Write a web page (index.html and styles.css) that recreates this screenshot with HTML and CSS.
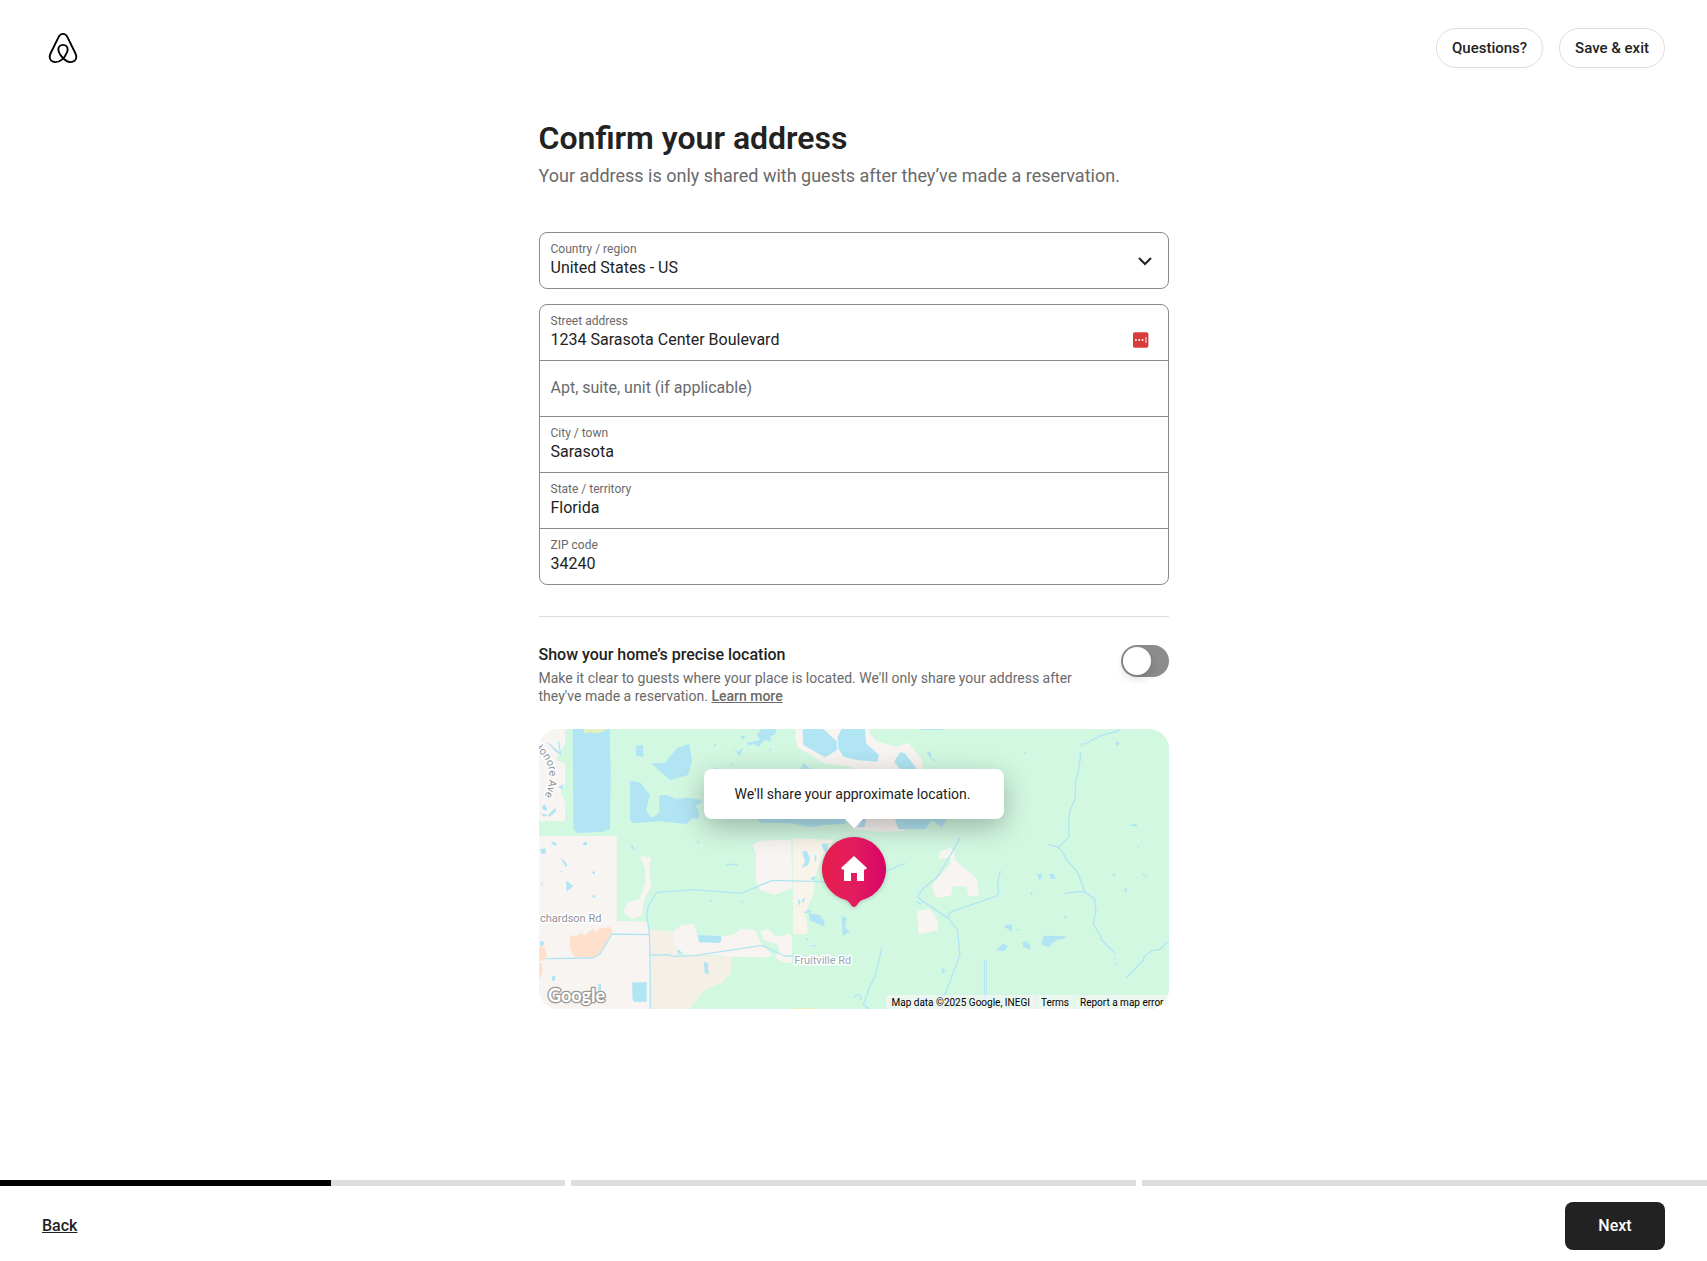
FILE: index.html
```html
<!DOCTYPE html>
<html lang="en">
  <head>
    <meta charset="UTF-8">
    <meta name="viewport" content="width=device-width,initial-scale=1">
    <title>Confirm your address</title>
    <link rel="stylesheet" href="styles.css">
  </head>
  <body>
    <header class="top-bar">
      <a class="logo" href="/" aria-label="Home">
        <svg viewBox="54 66 90 95" width="30" height="32" fill="none" stroke="#000" stroke-width="5.6" stroke-linejoin="round">
          <path d="M99 146C91 153 84 156 76 156C66 156 59 149 59 140C59 135 61 131 63 127L86 80C89 74 93 71 99 71C105 71 109 74 112 80L135 127C137 131 139 135 139 140C139 149 132 156 122 156C110 156 99 145 91 134C87 128 85 123 85 118C85 110 91 104 99 104C107 104 113 110 113 118C113 123 111 128 107 134C105 138 102 143 99 146Z"/>
        </svg>
      </a>
      <div class="top-actions">
        <button class="pill" type="button">Questions?</button>
        <button class="pill" type="button">Save &amp; exit</button>
      </div>
    </header>

    <main class="content">
      <h1>Confirm your address</h1>
      <p class="subtitle">Your address is only shared with guests after they’ve made a reservation.</p>

      <form class="address-form">
        <div class="field-group">
          <div class="field field-select">
            <label for="country">Country / region</label>
            <select id="country">
              <option>United States - US</option>
            </select>
            <svg class="chevron" viewBox="0 0 16 16" width="16" height="16" fill="none" stroke="#222" stroke-width="2">
              <path d="M2 5l6 6 6-6"/>
            </svg>
          </div>
        </div>

        <div class="field-group">
          <div class="field">
            <label for="street">Street address</label>
            <div class="field-row">
              <input type="text" id="street" value="1234 Sarasota Center Boulevard">
              <svg viewBox="0 0 16 16" width="16" height="16">
                <rect width="16" height="16" rx="2" fill="#d93a3a"/>
                <circle cx="3" cy="8" r="1" fill="#fff"/>
                <circle cx="6.5" cy="8" r="1" fill="#fff"/>
                <circle cx="10" cy="8" r="1" fill="#fff"/>
                <path d="M13.5 5v6" stroke="#fff"/>
              </svg>
            </div>
          </div>
          <div class="field field-empty">
            <input type="text" id="apt" aria-label="Apt, suite, unit (if applicable)" placeholder="Apt, suite, unit (if applicable)">
          </div>
          <div class="field">
            <label for="city">City / town</label>
            <input type="text" id="city" value="Sarasota">
          </div>
          <div class="field">
            <label for="state">State / territory</label>
            <input type="text" id="state" value="Florida">
          </div>
          <div class="field">
            <label for="zip">ZIP code</label>
            <input type="text" id="zip" value="34240">
          </div>
        </div>
      </form>

      <section class="precise">
        <div class="precise-text">
          <label class="precise-title" for="precise">Show your home’s precise location</label>
          <p>Make it clear to guests where your place is located. We'll only share your address after they've made a reservation. <a href="#">Learn more</a></p>
        </div>
        <input class="switch" type="checkbox" role="switch" id="precise">
      </section>

      <div class="map">
        <svg class="map-tiles" viewBox="27 27 1890 840" preserveAspectRatio="xMidYMid slice">
          <!-- built-up land -->
          <g fill="#f8f4f1">
            <path d="M27 27H105V70L78 120L105 132V190L92 217L105 245V303H27Z"/>
            <path d="M27 348H260V603L350 605L358 645L362 867H27Z"/>
            <path d="M797 27L795 52L802 80L880 128L960 140L980 150H1180L1176 120L1135 68L1100 80L1040 65L1018 40L1020 27Z"/>
            <path d="M960 290L970 328L1050 335L1120 333L1127 325L1100 318L1105 290Z"/>
            <path d="M330 408L363 412L357 440L363 500L342 540L336 587L305 597L280 577L292 545L327 540L347 487L345 445Z"/>
            <path d="M668 375L690 362L783 360L787 505L732 525L692 510L678 485V402Z"/>
            <path d="M690 633L715 628L740 650L780 642L787 655L785 728H760L735 712L750 690L738 670L700 660Z"/>
            <path d="M1225 418L1232 393L1262 384L1273 395L1275 420L1340 475L1347 527H1315L1310 500L1267 498L1263 527L1217 533L1205 495L1262 430V412Z"/>
            <path d="M1162 573L1200 566L1223 603V631L1165 642Z"/>
          </g>
          <path fill="#f8f4ec" d="M789 355L912 360L880 400L852 480L853 515L840 545L826 580L833 630L830 642H789Z"/>
          <path fill="#f5f0e5" d="M358 627L430 635L445 705L603 710V758L575 790L528 807L478 867H362Z"/>
          <path fill="#f8f4f1" d="M430 635L455 615L490 612L503 645L573 648L610 645L630 627L675 630L690 665L727 705L715 712L600 710L560 705H495L455 703L432 670Z"/>
          <g fill="#ffe0cc">
            <path d="M120 648L145 645L158 638L160 648L190 626L202 640L203 627L238 620L248 632L210 703L190 713H135L120 685Z"/>
            <path d="M27 678L45 682L51 710L45 720L27 723ZM27 727L35 732L39 750L30 775L27 777Z"/>
          </g>

          <!-- lakes and ponds -->
          <g fill="#b1e5f4">
            <path d="M128 27H238L242 150L240 330L225 331L222 335L140 339L130 325Z"/>
            <path d="M318 77L338 75L341 110L318 108Z"/>
            <path d="M363 130L405 128L440 85L478 71L486 120L475 165L420 180L375 140Z"/>
            <path d="M300 182L330 187L360 225L348 272L365 293L388 278V226L410 225L440 237L475 233L515 240L512 250L498 257L508 280L506 296H485L470 312L385 304L310 310L300 300Z"/>
            <path d="M550 75L560 70L557 82ZM610 82L623 95L640 85L628 110ZM630 50L648 46L640 60ZM650 68L690 60L680 42L695 27H738V40L722 50V66L705 60L685 80L670 72L655 77Z"/>
            <path d="M600 128L608 132V140ZM552 142L562 147H552ZM813 147L820 128L842 147ZM715 92L721 84L723 95Z"/>
            <path d="M818 27H880L921 65V90L885 112L820 75ZM935 27H1005L1008 70L1047 105L1042 125L980 120L940 110L925 85L923 50ZM1092 125L1110 97L1125 100L1160 147H1110Z"/>
            <path d="M678 290H950L945 312L880 315L840 322L780 310L690 308ZM983 322L1000 290H1010L1003 322ZM1093 290H1215L1185 327H1105ZM1195 290H1255L1235 323Z"/>
            <path d="M1190 98L1200 93L1205 115L1215 120L1213 125L1200 113ZM1482 98L1490 93L1488 104ZM1755 70L1762 64L1770 70L1762 78ZM1795 316L1820 310V320ZM1822 376L1832 383H1825Z"/>
            <path d="M1173 27H1240V30H1173ZM85 200L98 193V210ZM35 262L45 252L52 270L42 272ZM55 285L77 262V275L58 291ZM30 280L55 285L42 290Z"/>
            <path d="M63 364L80 370L78 377L68 375ZM157 375L163 365L171 366V375ZM92 412L111 432L110 444L98 426ZM30 388L46 385L48 400L35 402ZM500 362L510 366L505 372ZM303 378L308 374L312 388L306 388ZM318 374L321 390L317 394Z"/>
            <path d="M108 482L130 498L110 515ZM182 528L195 525V534ZM185 456L195 454L193 466ZM33 487L39 488L36 500ZM30 663L42 665L40 678L31 677ZM90 454L98 453L96 459Z"/>
            <path d="M503 645L573 648L575 660L568 669L507 667ZM440 692L448 690L460 703L445 700ZM522 725L534 730L536 763L524 760ZM307 787H350V845L313 846L307 835ZM66 768L77 767L75 782H66ZM205 792H213V815L205 812Z"/>
            <path d="M817 395L830 393L840 415L835 435L815 443L825 425ZM875 372L895 370L890 400L880 390ZM852 402L860 410L856 430ZM840 475L860 467L850 482ZM803 535L812 545L807 558ZM815 540L827 532L820 550ZM818 580L840 568L845 577ZM836 580L870 585L885 607L880 618L840 602ZM935 587L950 595L945 622L960 635L938 648ZM828 655L836 653L832 662ZM838 676L858 675L855 680ZM540 540L548 541L542 547ZM632 545L642 543L637 549ZM588 431H624V436H588Z"/>
            <path d="M1520 462H1537L1530 485ZM1558 462H1572L1577 477H1562ZM1500 517L1508 515L1506 528ZM1422 620L1430 613L1446 615V635ZM1458 628L1468 626L1464 634ZM1398 692L1418 670L1434 678L1426 692ZM1477 670L1484 662L1500 673L1501 688L1480 682ZM1535 675L1540 647L1607 648V655L1582 660L1565 670L1558 682ZM1234 742L1247 752L1237 762ZM1600 590L1610 587L1609 598ZM1745 468L1753 458L1757 468ZM1781 512L1790 500V518Z"/>
          </g>
          <path fill="#e4f0bd" d="M160 27H232L222 34L200 40L178 36L165 42ZM787 864H862V867H787Z"/>

          <!-- creeks -->
          <g fill="none" stroke="#b1e5f4" stroke-width="4" stroke-linejoin="round">
            <path d="M48 716L190 714L210 702L246 642L357 644"/>
            <path d="M960 485L880 485L727 481L632 520L490 509L380 517L355 560L350 585L358 635L360 705L420 705L425 709L495 707L695 676L765 708L830 709"/>
            <path d="M360 700L361 867"/>
            <path d="M55 70L92 102L85 65M92 102L70 88"/>
            <path d="M1770 28L1765 33L1713 47L1665 72H1655V82M1650 96L1652 105L1645 155L1637 185L1635 238L1620 270L1616 305L1617 350L1605 362L1585 382L1556 373M1585 382L1600 400L1610 420L1643 457L1665 517L1693 535L1698 570L1690 613L1710 645L1715 660L1750 695"/>
            <path d="M1603 521L1650 514L1665 517M1838 462L1852 473M1788 774L1840 720L1842 710L1865 692L1890 688L1910 667L1917 665"/>
            <path stroke-dasharray="8 7" d="M1753 697L1755 715L1760 735"/>
            <path d="M1285 352L1287 360L1250 425L1222 470L1175 510L1163 530L1175 542L1255 595L1282 628L1290 703L1247 820L1230 832M1255 595L1258 578L1402 527L1406 517L1403 490L1411 452"/>
            <path d="M1070 453L1125 430M1056 682L1035 770L1020 798L1000 855L1020 867M970 832L985 824L993 832V840M1158 546L1172 551"/>
            <path stroke-width="3" d="M1363 720V840M1369 720V840"/>
          </g>

          <!-- place names -->
          <g class="map-label">
            <path id="honore" fill="none" stroke="none" d="M8 78C60 120 76 170 34 250"/>
            <text><textPath href="#honore">Honore Ave</textPath></text>
            <text x="30" y="606">chardson Rd</text>
            <text class="map-road" x="793" y="732">Fruitville Rd</text>
          </g>
          <text class="map-brand" x="54" y="846">Google</text>
        </svg>

        <div class="marker">
          <div class="tooltip">We'll share your approximate location.</div>
          <svg class="pin" viewBox="0 0 64 72" width="64" height="72">
            <defs>
              <linearGradient id="pinFill">
                <stop offset="0" stop-color="#e61e4d"/>
                <stop offset="0.5" stop-color="#e31c5f"/>
                <stop offset="1" stop-color="#d70466"/>
              </linearGradient>
            </defs>
            <path fill="url(#pinFill)" d="M32 0a32 32 0 0 1 8 63c-2 1-3 2-5 5q-3 4-6 0c-2-3-3-4-5-5a32 32 0 0 1 8-63z"/>
            <path fill="#fff" d="M32 19l13 12-2 2-1-1v12h-7v-8h-6v8h-7V32l-1 1-2-2z"/>
          </svg>
        </div>

        <div class="map-credits">
          <span>Map data ©2025 Google, INEGI</span>
          <a href="#">Terms</a>
          <a href="#">Report a map error</a>
        </div>
      </div>
    </main>

    <footer class="bottom-bar">
      <div class="progress">
        <div class="step"><div class="step-fill" style="width:58.5%"></div></div>
        <div class="step"></div>
        <div class="step"></div>
      </div>
      <div class="bottom-actions">
        <button class="back-button" type="button">Back</button>
        <button class="next-button" type="button">Next</button>
      </div>
    </footer>
  </body>
</html>
```
FILE: styles.css
```css
* {
  box-sizing: border-box;
}

body {
  display: flex;
  flex-direction: column;
  min-height: 100vh;
  margin: 0;
  background-color: #fff;
  color: #222;
  font-family: Roboto, "Liberation Sans", sans-serif;
}

button,
input,
select {
  font-family: inherit;
  color: inherit;
}

button {
  cursor: pointer;
}

.top-bar {
  display: flex;
  align-items: center;
  justify-content: space-between;
  height: 96px;
  padding: 0 42px 0 48px;
}

.logo svg {
  display: block;
}

.top-actions {
  display: flex;
  gap: 16px;
}

.pill {
  height: 40px;
  padding: 0 15px;
  background: #fff;
  border: 1px solid #ddd;
  border-radius: 20px;
  font-size: 15px;
  font-weight: 500;
}

.content {
  flex: 1;
  width: 100%;
  max-width: 630px;
  margin: 0 auto;
  padding: 24px 0;
}

h1 {
  margin: 0 0 8px;
  font-size: 32px;
  line-height: 36px;
  font-weight: 600;
}

.subtitle {
  margin: 0 0 44px;
  color: #6a6a6a;
  font-size: 18px;
  line-height: 24px;
}

.address-form {
  display: grid;
  gap: 15px;
  padding-bottom: 31px;
  border-bottom: 1px solid #ddd;
}

.field-group {
  border: 1px solid #8c8c8c;
  border-radius: 8px;
}

.field {
  position: relative;
  padding: 8px 11px 10px;
}

.field + .field {
  border-top: 1px solid #8c8c8c;
}

.field label {
  display: block;
  margin-bottom: 1px;
  color: #6a6a6a;
  font-size: 12px;
  line-height: 16px;
}

.field input,
.field select {
  display: block;
  width: 100%;
  height: 20px;
  padding: 0;
  border: 0;
  outline: 0;
  background: none;
  appearance: none;
  font-size: 16px;
  line-height: 20px;
}

.field input::placeholder {
  color: #6a6a6a;
}

.field-empty {
  padding: 17px 11px 18px;
}

.field-row {
  display: flex;
  align-items: center;
  gap: 8px;
  padding-right: 8px;
}

/* drawn over the select, which spans the whole field */
.chevron {
  position: absolute;
  top: 20px;
  right: 15px;
  pointer-events: none;
}

.precise {
  display: flex;
  align-items: flex-start;
  justify-content: space-between;
  gap: 24px;
  padding: 28px 0 24px;
}

.precise-title {
  display: block;
  font-size: 16px;
  line-height: 20px;
  font-weight: 500;
}

.precise p {
  margin: 4px 0 0;
  color: #6a6a6a;
  font-size: 14px;
  line-height: 18px;
}

.precise a {
  color: inherit;
  font-weight: 500;
}

.switch {
  flex: none;
  width: 48px;
  height: 32px;
  margin: 0;
  padding: 2px;
  appearance: none;
  background-color: #8c8c8c;
  border-radius: 16px;
  cursor: pointer;
}

.switch::before {
  content: "";
  display: block;
  width: 28px;
  height: 28px;
  background-color: #fff;
  border-radius: 50%;
  box-shadow: 0 4px 8px rgba(0, 0, 0, .15);
}

.switch:checked {
  background-color: #222;
}

.switch:checked::before {
  margin-left: auto;
}

.map {
  position: relative;
  height: 280px;
  overflow: hidden;
  background-color: #d3f8e2;
  border-radius: 20px;
}

.map-tiles {
  display: block;
  width: 100%;
  height: 100%;
}

.map-label {
  fill: #8e9499;
  stroke: #fff;
  stroke-width: 9px;
  stroke-linejoin: round;
  paint-order: stroke;
  font-size: 33px;
}

.map-road {
  fill: #9aa5b8;
}

.map-brand {
  fill: #fff;
  stroke: #999;
  stroke-width: 8px;
  stroke-linejoin: round;
  paint-order: stroke;
  font-family: Lato, sans-serif;
  font-size: 54px;
  font-weight: 700;
}

/* marker floats over the map */
.marker {
  position: absolute;
  top: 40px;
  left: 0;
  right: 0;
  display: flex;
  flex-direction: column;
  align-items: center;
  gap: 18px;
}

.tooltip {
  position: relative;
  width: 300px;
  padding: 16px 24px 16px 31px;
  background-color: #fff;
  border-radius: 8px;
  box-shadow: 0 8px 28px rgba(0, 0, 0, .28);
  font-size: 14px;
  line-height: 18px;
  white-space: nowrap;
}

.tooltip::after {
  content: "";
  position: absolute;
  top: 100%;
  left: 50%;
  margin-left: -9px;
  border: 9px solid transparent;
  border-top-color: #fff;
  border-bottom: 0;
}

.pin {
  filter: drop-shadow(0 1px 2px rgba(0, 0, 0, .2));
}

.map-credits {
  position: absolute;
  right: 0;
  bottom: 0;
  display: flex;
  gap: 1px;
  font-size: 10px;
  line-height: 12px;
}

.map-credits span,
.map-credits a {
  padding: 2px 5px 0;
  background-color: rgba(245, 245, 245, .7);
  color: #000;
  text-decoration: none;
}

.progress {
  display: grid;
  grid-template-columns: repeat(3, 1fr);
  gap: 6px;
}

.step {
  height: 6px;
  background-color: #ddd;
}

.step-fill {
  height: 100%;
  background-color: #000;
}

.bottom-actions {
  display: flex;
  align-items: center;
  justify-content: space-between;
  padding: 16px 42px 11px;
}

.back-button {
  padding: 0 0 2px;
  background: none;
  border: 0;
  font-size: 16px;
  font-weight: 500;
  text-decoration: underline;
}

.next-button {
  min-width: 100px;
  height: 48px;
  padding: 0 32px 2px;
  background-color: #222;
  border: 0;
  border-radius: 8px;
  color: #fff;
  font-size: 16px;
  font-weight: 500;
}

@media (max-width: 700px) {
  .content {
    padding: 24px;
  }

  .top-bar,
  .bottom-actions {
    padding-left: 24px;
    padding-right: 24px;
  }
}
```
